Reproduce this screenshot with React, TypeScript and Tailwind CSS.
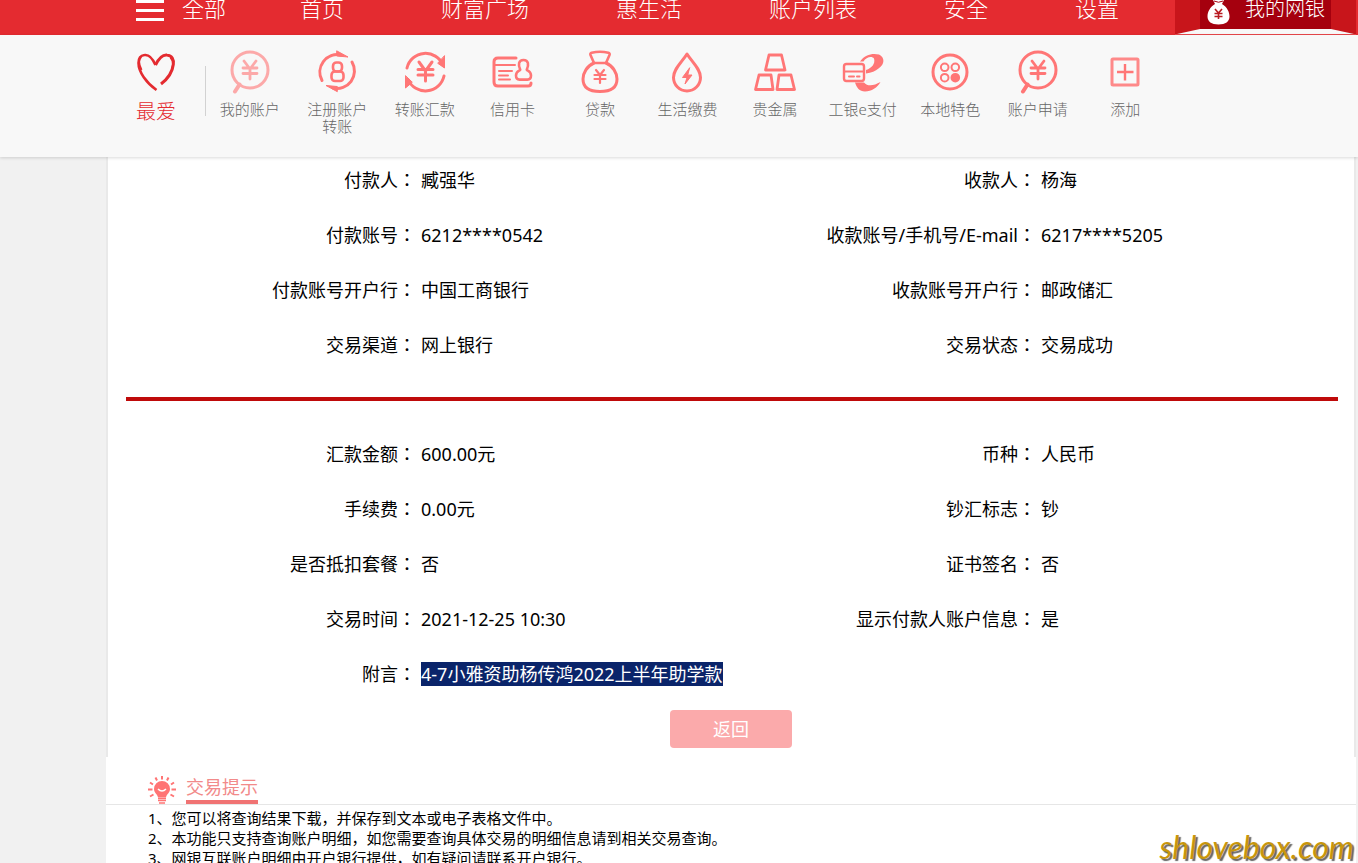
import React from "react";

const Yen = () => (
  <path d="M16 11l6 8 6-8M22 19v10M15 18h14M15 23.5h14" strokeWidth="2.8" />
);

const Magnifier = () => (
  <>
    <circle cx="22" cy="20" r="18" />
    <path d="M11.5 34.5L7 41.5" strokeWidth="4" />
    <Yen />
  </>
);

const shortcuts = [
  { label: "我的账户", faded: true, icon: <Magnifier /> },
  {
    label: "注册账户转账",
    icon: (
      <>
        <path d="M7 30.5A17.5 17.5 0 0 1 26 5M37 12A17.5 17.5 0 0 1 18 38" />
        <path d="M22 1l11 6-11-1zM22 41.5l-11-6 11 1z" fill="currentColor" strokeWidth="1" />
        <rect x="18" y="12.5" width="9" height="9" rx="3.5" strokeWidth="2.6" />
        <rect x="16.5" y="21.5" width="12" height="9.5" rx="3.5" strokeWidth="2.6" />
      </>
    ),
  },
  {
    label: "转账汇款",
    icon: (
      <>
        <path d="M4 18A19 19 0 0 1 40 15M41 26A19 19 0 0 1 5 29.5" />
        <path d="M41.5 6v12L35 13.5zM2.5 26v12L9 32.500z" fill="currentColor" strokeWidth="1" />
        <path d="M16 12l6.5 9L29 12M22.5 21v10M15 19.5h15M15 25h15" strokeWidth="3" />
      </>
    ),
  },
  {
    label: "信用卡",
    icon: (
      <>
        <path d="M26 8H8q-4 0-4 4v20q0 4 4 4h30q3 0 3-3" />
        <path d="M4 15h21M9 21h13M9 25.5h9M9 29.5h11" strokeWidth="2" />
        <path d="M30 19q-1.5-3-.9-6 .9-3 4.4-3t4.4 3q.6 3-.9 6-.7 1 .8 1.6 3.2 1.4 3.2 5 0 4-3.5 4h-8q-3.5 0-3.5-4 0-3.6 3.2-5 1.5-.6.8-1.6z" strokeWidth="2.6" />
      </>
    ),
  },
  {
    label: "贷款",
    icon: (
      <>
        <path d="M16 13L12.5 5q-.6-1.6 1.2-2.2 8.3-2 16.6 0 1.8.6 1.2 2.200L28 13M16 13h12" strokeWidth="2.6" />
        <path d="M16 13C9 16 5 23 5 29c0 9 7 12.5 17 12.5S39 38 39 29c0-6-4-13-11-16" />
        <path d="M18 20l4 5 4-5M22 25v8M16.5 25h11M16.5 29h11" strokeWidth="2.2" />
      </>
    ),
  },
  {
    label: "生活缴费",
    icon: (
      <>
        <path d="M22 4C17 12 8.5 19 8.5 27.5a13.5 13.5 0 0 0 27 0C35.5 19 27 12 22 4z" />
        <path d="M24.5 18l-7 9.5H22L20 34l7-9h-4z" fill="currentColor" strokeWidth="1" />
      </>
    ),
  },
  {
    label: "贵金属",
    icon: (
      <path d="M16 5h12.5L32 20H12.500zM6 25h12l2 14.5H2.500zM26 25h12l3.5 14.5H24z" strokeWidth="2.8" />
    ),
  },
  {
    label: "工银e支付",
    icon: (
      <>
        <rect x="3" y="14" width="20" height="17" rx="2.5" strokeWidth="2.4" />
        <path d="M3 21.5h20M8 26.5h5M16 26.5h2.5" strokeWidth="2" />
        <path d="M19 11.500C24 4 32 3 38 4.500c6 2.500 6 10-.5 14-3 2.500-7 4.500-12.500 5V20C31 18 34.500 13.500 33 8.500 31 5.500 25 7 22.500 11.500zM14 32.500h9c4 4.500 10 3 16.500-.5-3 5.500-9 9.500-15.500 9.500-5.500 0-8.500-4-10-9z" fill="currentColor" stroke="none" />
      </>
    ),
  },
  {
    label: "本地特色",
    icon: (
      <>
        <circle cx="22" cy="22" r="17" />
        <g strokeWidth="2">
          <circle cx="16.7" cy="17.3" r="3.8" />
          <circle cx="27.3" cy="17.3" r="3.8" />
          <circle cx="16.7" cy="27.7" r="3.8" />
          <circle cx="27.3" cy="27.7" r="3.8" fill="currentColor" />
        </g>
      </>
    ),
  },
  { label: "账户申请", icon: <Magnifier /> },
  {
    label: "添加",
    icon: (
      <>
        <rect x="9" y="9" width="26" height="26" rx="1" opacity=".85" />
        <path d="M14 22h16.5M22 14v16.5" strokeWidth="2.4" strokeLinecap="butt" />
      </>
    ),
  },
];

const navItems = ["财富广场", "惠生活", "账户列表", "安全", "设置"];

const parties = [
  ["付款人", "臧强华"],
  ["收款人", "杨海"],
  ["付款账号", "6212****0542"],
  ["收款账号/手机号/E-mail", "6217****5205"],
  ["付款账号开户行", "中国工商银行"],
  ["收款账号开户行", "邮政储汇"],
  ["交易渠道", "网上银行"],
  ["交易状态", "交易成功"],
];

const payment = [
  ["汇款金额", "600.00元"],
  ["币种", "人民币"],
  ["手续费", "0.00元"],
  ["钞汇标志", "钞"],
  ["是否抵扣套餐", "否"],
  ["证书签名", "否"],
  ["交易时间", "2021-12-25 10:30"],
  ["显示付款人账户信息", "是"],
  ["附言", "4-7小雅资助杨传鸿2022上半年助学款"],
];

const tips = [
  "1、您可以将查询结果下载，并保存到文本或电子表格文件中。",
  "2、本功能只支持查询账户明细，如您需要查询具体交易的明细信息请到相关交易查询。",
  "3、网银互联账户明细由开户银行提供，如有疑问请联系开户银行。",
];

const Details = ({ rows }: { rows: string[][] }) => (
  <dl className="-ml-0.5 grid grid-cols-2 gap-y-[31px] pr-2 text-lg leading-6">
    {rows.map(([label, value]) => (
      <div key={label} className="flex h-6">
        <dt className="w-1/2 text-right whitespace-nowrap">
          {label}
          <span className="font-['Noto_Sans_CJK_TC',sans-serif] leading-none" lang="zh-Hant">：</span>
        </dt>
        <dd className="pl-[5px] whitespace-nowrap">
          {label === "附言" ? (
            <mark className="block bg-[#0a246a] text-white">{value}</mark>
          ) : (
            value
          )}
        </dd>
      </div>
    ))}
  </dl>
);

const TopBar = () => (
  <header className="flex h-[35px] shrink-0 bg-[#e42b30] pl-[136px] text-[22px] leading-4 font-light text-white">
    <button type="button" className="flex items-start gap-[18px]">
      <svg width="28" height="21" viewBox="0 0 28 21" stroke="#fff" strokeWidth="3">
        <path d="M0 1.5h28M0 10.5h28M0 19.5h28" />
      </svg>
      全部
    </button>
    <nav className="ml-[74px] flex items-start gap-[87px] whitespace-nowrap">
      <a href="#" className="mr-[10px]">首页</a>
      {navItems.map((item) => (
        <a href="#" key={item}>{item}</a>
      ))}
    </nav>
    <div className="mr-[2px] ml-auto w-[181px] bg-[#c8151b]">
      <a href="#" className="mx-[25px] flex h-[29px] items-start justify-between bg-[#a5000e] pr-[6px] pl-[7px] text-xl leading-[18px]">
        <svg width="23" height="25" viewBox="0 0 23 25">
          <path d="M6 0h11l-2 4C20 7 22.5 12 22.5 16.5c0 5-4 8-11 8s-11-3-11-8C.5 12 3 7 8 4z" fill="#fff" />
          <path d="M7 1q4.5 2.500 9 0" stroke="#a5000e" fill="none" />
          <path d="M8 9l3.5 4L15 9M11.5 13v6M7.5 13.5h8M7.5 16.5h8" stroke="#b81c22" strokeWidth="1.6" fill="none" />
        </svg>
        我的网银
      </a>
      <svg className="block h-[6px] w-full" viewBox="0 0 181 6" preserveAspectRatio="none">
        <path d="M25 0h131l23 5H2z" fill="#f8f8f8" />
        <path d="M0 5.5h181" stroke="#e8474b" />
      </svg>
    </div>
  </header>
);

const ShortcutBar = () => (
  <nav className="relative z-10 flex h-[122px] shrink-0 bg-[#f8f8f8] pl-[136px] shadow-[0_1px_3px_rgba(0,0,0,0.15)]">
    <a href="#" className="mt-[17px] flex w-10 flex-col items-center text-xl font-light text-[#e42b30]">
      <svg width="40" height="40" viewBox="0 0 40 40" fill="none" stroke="currentColor" strokeWidth="3">
        <path d="M19.5 13C16 5 12 2.5 8.5 3 4 3.5 2.5 7 2.5 11c0 9 8 20 18 27" strokeWidth="2.6" />
        <path d="M19.5 13C23 6 27 2.5 31 3c5 .5 7 4.5 6.3 9.500C36.5 19.5 31.5 27 25 32" />
        <path d="M5.5 18C3 13 2 8 5 5M36 17c2-5 1-9-1.5-11.500" strokeWidth="2" />
      </svg>
      <span className="mt-[6px]">最爱</span>
    </a>
    <span className="mt-[31px] ml-[29px] h-[50px] w-px bg-[#d2d2d2]" />
    <ul className="grid w-[963px] grid-cols-11">
      {shortcuts.map(({ label, icon, faded }) => (
        <li key={label}>
          <a href="#" className="flex flex-col items-center px-2 pt-[15px] text-center text-[15px] leading-[17px] font-light text-[#666]">
            <svg
              className={faded ? "text-[#ff7676] opacity-60" : "text-[#ff7676]"}
              width="44"
              height="44"
              viewBox="0 0 44 44"
              fill="none"
              stroke="currentColor"
              strokeWidth="3"
              strokeLinecap="round"
              strokeLinejoin="round"
            >
              {icon}
            </svg>
            <span className="mt-[7px]">{label}</span>
          </a>
        </li>
      ))}
    </ul>
  </nav>
);

const Tips = () => (
  <section className="pt-[19px]">
    <div className="flex h-[29px] items-start border-b border-[#e6e6e6] pl-[42px]">
      <svg width="28" height="28" viewBox="0 0 28 28" fill="#ff7474" stroke="#ff7474">
        <path d="M14 5A8 8 0 0 0 6 13c0 4 3.5 5 4 8.500h8c.5-3.5 4-4.500 4-8.500A8 8 0 0 0 14 5z" stroke="none" />
        <path d="M14 0v3.5M7.5 1.5L9 4.500M20.5 1.5L19 4.500M2 6.5l3 2M26 6.5l-3 2M0 13.5h4.500M23.500 13.5H28M2 20.5l3.500-2M26 20.500l-3.500-2" strokeWidth="2" />
        <path d="M10 22.5h8M10 24.5h8M11 27h6" strokeWidth="1.5" />
        <path d="M10 13q4 4 8 0" fill="none" stroke="#fff" strokeWidth="1.5" />
      </svg>
      <h2 className="ml-[10px] h-7 border-b-4 border-[#f07373] text-lg leading-[22px] text-[#f28a8a]">交易提示</h2>
    </div>
    <ol className="pt-[3px] pl-[42px] text-[15px] leading-5">
      {tips.map((tip) => (
        <li key={tip}>{tip}</li>
      ))}
    </ol>
  </section>
);

const App = () => {
  return (
    <div className="relative flex h-screen flex-col overflow-hidden bg-[#f1f1f1] font-['Noto_Sans','Noto_Sans_CJK_SC',sans-serif] text-black" lang="zh-CN">
      <TopBar />
      <ShortcutBar />

      <main className="mr-[2px] ml-[106px] flex-1 bg-white">
        <section className="h-[600px] border-x-2 border-[#e9e9e9] pt-[11px]">
          <Details rows={parties} />
          <hr className="mt-10 mr-4 mb-[41px] ml-[18px] border-t-4 border-[#bf0a0a]" />
          <Details rows={payment} />
          <button type="button" className="mx-auto mt-6 block h-[38px] w-[122px] rounded-sm bg-[#fbaaab] text-lg text-white">
            返回
          </button>
        </section>
        <Tips />
      </main>

      <span className="absolute right-1 bottom-0 font-['Lato',sans-serif] text-[32px] leading-8 text-[#c8960c] italic [text-shadow:2px_2px_1px_#666]">
        shlovebox.com
      </span>
    </div>
  );
};

export default App;
